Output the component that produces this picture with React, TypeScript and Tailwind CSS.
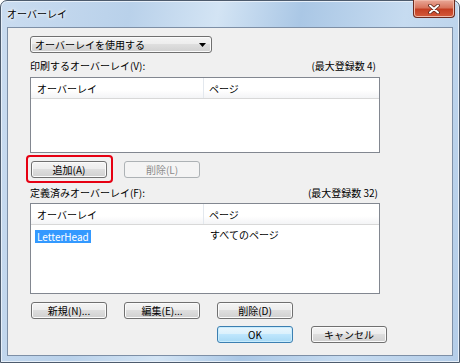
// Overlay settings dialog (Windows 7 style)
import React from 'react'

const btn =
  'h-[17px] w-[76px] rounded-[3px] border border-[#707070] bg-[linear-gradient(#f4f4f4_0%,#ececec_50%,#dedede_50%,#d0d0d0_100%)] shadow-[inset_0_0_0_1px_#fbfbfb] text-[10px] leading-none text-black flex items-center justify-center'
const btnDisabled =
  'h-[17px] w-[76px] rounded-[3px] border border-[#adb2b5] bg-[#f4f4f4] text-[10px] leading-none text-[#8b8b8b] flex items-center justify-center'
const btnDefault =
  'h-[17px] w-[76px] rounded-[3px] border border-[#3c7fb1] bg-[linear-gradient(#eaf6fd_0%,#d9f0fc_50%,#bee6fd_50%,#a7d9f5_100%)] shadow-[inset_0_0_0_1px_#c8ecfd] text-[10px] leading-none text-black flex items-center justify-center'

function ListView({ height, children }: { height: string; children?: React.ReactNode }) {
  return (
    <div className={`${height} w-[350px] border border-[#828790] bg-white flex flex-col`}>
      <div className="h-[21px] flex border-b border-[#d8d8d8] bg-[linear-gradient(#ffffff_0%,#ffffff_60%,#f3f4f6_100%)] shrink-0">
        <div className="w-[173px] border-r border-[#e3e8ee] pl-[6px] flex items-center text-[10px]">オーバーレイ</div>
        <div className="flex-1 pl-[5px] flex items-center text-[10px]">ページ</div>
      </div>
      {children}
    </div>
  )
}

export default function App() {
  return (
    <div className="w-[460px] h-[363px] bg-white font-['Noto_Sans_CJK_JP',sans-serif] text-black">
      <div className="h-full rounded-t-[7px] border border-[#4d5b6d] bg-[linear-gradient(100deg,#cadcf0_0%,#b9d1ea_25%,#d3e4f4_42%,#aac7e5_58%,#c6dbf0_78%,#b4cde8_100%)] flex flex-col px-[6px] pb-[6px] shadow-[inset_0_0_0_1px_#e6eff9]">
        {/* title bar */}
        <div className="h-[26px] flex items-start justify-between shrink-0">
          <span className="mt-[7px] text-[10px] leading-[12px] [text-shadow:0_0_5px_#ffffff,0_0_3px_#ffffff]">オーバーレイ</span>
          <div className="-mt-px -mr-[2px] w-[42px] h-[18px] rounded-b-[4px] border border-[#6b2a1f] border-t-0 bg-[linear-gradient(#e9a898_0%,#d8755d_45%,#c43e22_55%,#d45a3a_100%)] shadow-[inset_0_0_0_1px_#f0b8a8] flex items-center justify-center">
            <svg width="12" height="10" viewBox="0 0 12 10">
              <path d="M2 1.5 L10 8.5 M10 1.5 L2 8.5" stroke="#5a2418" strokeWidth="3.6" strokeLinecap="round" />
              <path d="M2 1.5 L10 8.5 M10 1.5 L2 8.5" stroke="#ffffff" strokeWidth="2" strokeLinecap="round" />
            </svg>
          </div>
        </div>

        {/* client area */}
        <div className="flex-1 bg-[#f0f0f0] border border-[#7d8fa6] pl-[22px] pt-[8px] flex flex-col">
          {/* combo */}
          <div className="h-[17px] w-[182px] rounded-[3px] border border-[#707070] bg-[linear-gradient(#f4f4f4_0%,#ececec_50%,#dedede_50%,#d0d0d0_100%)] shadow-[inset_0_0_0_1px_#fbfbfb] flex items-center justify-between pl-[4px] pr-[5px]">
            <span className="text-[10px] leading-none">オーバーレイを使用する</span>
            <svg width="7" height="4" viewBox="0 0 7 4"><path d="M0 0 H7 L3.5 4 Z" fill="#000" /></svg>
          </div>

          <div className="mt-[7px] h-[12px] w-[350px] flex justify-between items-center text-[10px] leading-[12px]">
            <span>印刷するオーバーレイ(V):</span>
            <span className="pr-[4px]">(最大登録数 4)</span>
          </div>

          <div className="mt-[5px]">
            <ListView height="h-[76px]" />
          </div>

          <div className="mt-[8px] ml-px flex gap-[17px]">
            <div className="relative">
              <span className="absolute -left-[5px] -top-[6px] -right-[6px] -bottom-[5px] rounded-[4px] border-2 border-[#e60012]" />
              <div className={btn}>追加(A)</div>
            </div>
            <div className={btnDisabled}>削除(L)</div>
          </div>

          <div className="mt-[9px] h-[12px] w-[350px] flex justify-between items-center text-[10px] leading-[12px]">
            <span>定義済みオーバーレイ(F):</span>
            <span className="pr-[2px]">(最大登録数 32)</span>
          </div>

          <div className="mt-[4px]">
            <ListView height="h-[91px]">
              <div className="flex h-[14px] mt-[2px] items-center">
                <div className="w-[174px] pl-[4px]">
                  <span className="bg-[#3399ff] text-white text-[10px] leading-[13px] px-[2px] inline-block h-[13px]">LetterHead</span>
                </div>
                <div className="pl-[5px] text-[10px] leading-[13px]">すべてのページ</div>
              </div>
            </ListView>
          </div>

          <div className="mt-[8px] ml-px flex gap-[17px]">
            <div className={btn}>新規(N)...</div>
            <div className={btn}>編集(E)...</div>
            <div className={btn}>削除(D)</div>
          </div>

          <div className="mt-[7px] ml-[187px] flex gap-[18px]">
            <div className={btnDefault}>OK</div>
            <div className={btn}>キャンセル</div>
          </div>
        </div>
      </div>
    </div>
  )
}
